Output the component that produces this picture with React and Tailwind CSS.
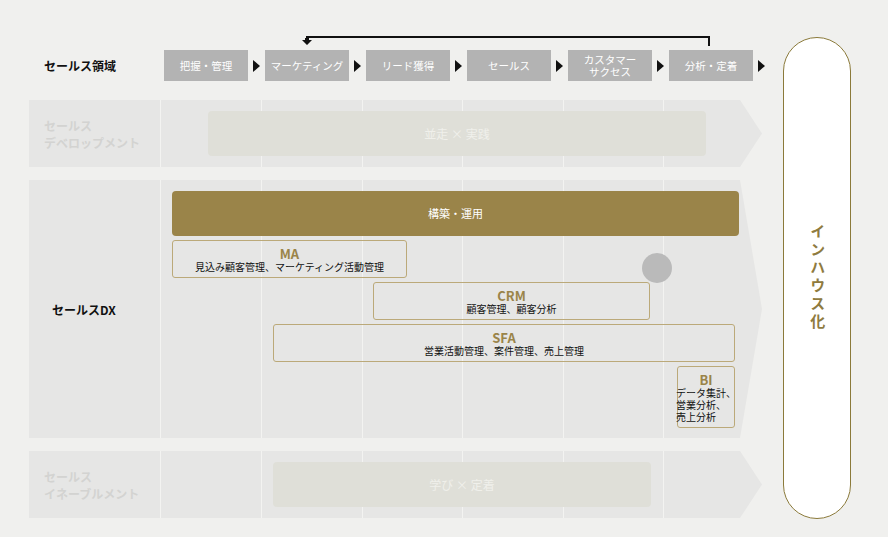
const F = { fontFamily: '"Noto Sans CJK JP","Noto Sans",sans-serif' };
const steps = ["把握・管理", "マーケティング", "リード獲得", "セールス", "カスタマー\nサクセス", "分析・定着"];

function Tri() {
  return <svg width="7" height="12" viewBox="0 0 7 12" className="shrink-0"><path d="M0 0L7 6L0 12Z" fill="#111" /></svg>;
}

function Band({ h, children, label, faded }) {
  return (
    <div className="relative w-[733px] [clip-path:polygon(0_0,calc(100%-22px)_0,100%_50%,calc(100%-22px)_100%,0_100%)] bg-[#e6e6e5]" style={{ height: h }}>
      {[131, 232, 333, 433, 534, 634].map((x) => (
        <div key={x} className="absolute top-0 bottom-0 w-px bg-[#f3f3f1]" style={{ left: x }} />
      ))}
      <div className={`absolute left-0 top-0 bottom-0 w-[131px] flex items-center ${faded ? "pl-[15px] text-[#d3d3d1] font-bold" : "pl-[23px] text-[#111] font-bold"} text-[12px] leading-[17px] whitespace-pre`}>{label}</div>
      {children}
    </div>
  );
}

const Box = ({ t, w, h, title, sub, left }) => (
  <div className="absolute border border-[#bba979] rounded-[3px] flex flex-col items-center justify-center" style={{ left, top: t, width: w, height: h }}>
    <div className="text-[#9a8449] font-bold text-[13px] leading-[15px]">{title}</div>
    <div className={`text-[#111] text-[10px] leading-[12px] ${sub.includes("\n") ? "whitespace-pre text-left" : ""}`}>{sub}</div>
  </div>
);

export default function App() {
  return (
    <div style={F} className="w-[888px] h-[537px] bg-[#f0f0ee] relative overflow-hidden">
      <div className="absolute left-[306px] top-[36px] w-[404px] h-[10px] border-t-2 border-r-2 border-[#111]" />
      <svg className="absolute left-[302px] top-[38px]" width="10" height="7" viewBox="0 0 10 7"><path d="M3 0h4v2h3L5 7 0 2h3z" fill="#111" /></svg>

      <div className="flex flex-col pl-[29px] pt-[50px]">
        <div className="flex items-center h-[31px]">
          <div className="w-[131px] pl-[15px] text-[12px] font-bold text-[#111]">セールス領域</div>
          <div className="flex items-center pl-[4px] gap-[5px]">
            {steps.map((s) => (
              <div key={s} className="flex items-center gap-[5px]">
                <div className="w-[84px] h-[31px] bg-[#b3b3b3] text-white text-[10.5px] leading-[12px] whitespace-pre text-center flex items-center justify-center">{s}</div>
                <Tri />
              </div>
            ))}
          </div>
        </div>

        <div className="mt-[19px]">
          <Band h={67} faded label={"セールス\nデベロップメント"}>
            <div className="absolute left-[179px] top-[11px] w-[498px] h-[45px] rounded-[4px] bg-[#dfdfd8] flex items-center justify-center text-[#f0f0eb] text-[12px]">並走 × 実践</div>
          </Band>
        </div>

        <div className="mt-[13px]">
          <Band h={258} label="セールスDX">
            <div className="absolute left-[143px] top-[11px] w-[567px] h-[45px] rounded-[4px] bg-[#9a8449] flex items-center justify-center text-white text-[11px]">構築・運用</div>
            <Box left={143} t={60} w={235} h={38} title="MA" sub="見込み顧客管理、マーケティング活動管理" />
            <Box left={344} t={102} w={277} h={38} title="CRM" sub="顧客管理、顧客分析" />
            <Box left={244} t={144} w={462} h={38} title="SFA" sub="営業活動管理、案件管理、売上管理" />
            <Box left={648} t={186} w={58} h={62} title="BI" sub={"データ集計、\n営業分析、\n売上分析"} />
            <div className="absolute left-[613px] top-[73px] w-[30px] h-[30px] rounded-full bg-[#bababa]" />
          </Band>
        </div>

        <div className="mt-[13px]">
          <Band h={67} faded label={"セールス\nイネーブルメント"}>
            <div className="absolute left-[244px] top-[11px] w-[378px] h-[45px] rounded-[4px] bg-[#dfdfd8] flex items-center justify-center text-[#f0f0eb] text-[12px]">学び × 定着</div>
          </Band>
        </div>
      </div>

      <div className="absolute left-[783px] top-[37px] w-[68px] h-[482px] rounded-full border-[1.5px] border-[#8b7a3a] bg-white flex items-center justify-center">
        <div className="[writing-mode:vertical-rl] text-[#8f7b3f] font-bold text-[15px] tracking-[3px]">インハウス化</div>
      </div>
    </div>
  );
}
